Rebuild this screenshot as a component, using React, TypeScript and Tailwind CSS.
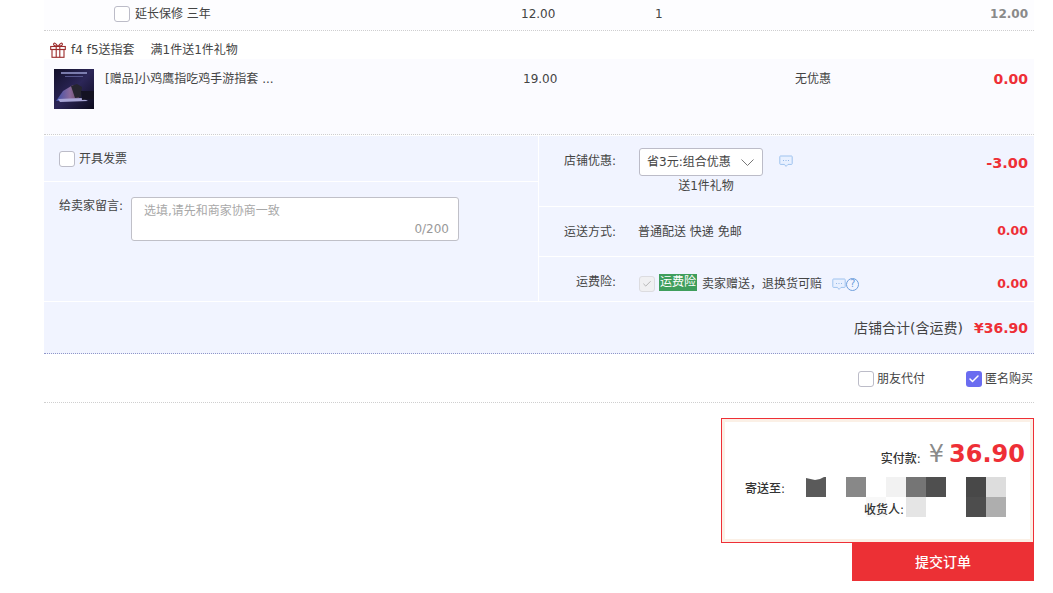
import { Check } from "lucide-react";

const font = '"DejaVu Sans","Noto Sans CJK SC",sans-serif';

function Box({ className = "" }: { className?: string }) {
  return <span className={`block size-4 shrink-0 rounded-[3px] border border-[#bcbcc8] bg-white ${className}`} />;
}

function ChatIcon({ className = "" }: { className?: string }) {
  return (
    <svg viewBox="0 0 14 13" className={`h-[13px] w-[14px] ${className}`} fill="#e8f0ff" stroke="#9fc3ee" strokeWidth="1">
      <path d="M1.5 1h11a.7.7 0 0 1 .7.7v7a.7.7 0 0 1-.7.7H9l-2 2-1.6-2H1.5a.7.7 0 0 1-.7-.7v-7a.7.7 0 0 1 .7-.7z" />
      <path d="M4 5.5h.8M6.6 5.5h.8M9.200 5.500h.8" stroke="#7fabe2" />
    </svg>
  );
}

function GiftIcon() {
  return (
    <svg viewBox="0 0 16 16" className="size-4 shrink-0" fill="none" stroke="#9c2b2b" strokeWidth="1.100">
      <rect x="0.700" y="4.500" width="14.600" height="3" />
      <rect x="2" y="7.500" width="12" height="7.800" />
      <path d="M6.200 4.500v10.800M9.800 4.500v10.800" />
      <path d="M7.700 4.300C6 .6 3.300.4 3.600 2.400c.2 1.300 2.300 1.900 4.100 1.900zM8.300 4.300C10 .6 12.700.4 12.400 2.400c-.2 1.300-2.300 1.900-4.100 1.900z" />
    </svg>
  );
}

function Thumb() {
  return (
    <svg viewBox="0 0 40 40" className="size-10 shrink-0">
      <defs>
        <linearGradient id="bg" x1="0" y1="0" x2="1" y2="1">
          <stop offset="0" stopColor="#12102a" />
          <stop offset="0.500" stopColor="#2c2658" />
          <stop offset="1" stopColor="#0c0a1c" />
        </linearGradient>
        <linearGradient id="arm" x1="0" y1="0" x2="1" y2="0">
          <stop offset="0" stopColor="#3d4fa8" />
          <stop offset="0.600" stopColor="#8a6a9c" />
          <stop offset="1" stopColor="#6b4a60" />
        </linearGradient>
      </defs>
      <rect width="40" height="40" fill="url(#bg)" />
      <rect x="7" y="3" width="26" height="2" fill="#9295c8" opacity="0.800" />
      <rect x="11" y="7" width="18" height="1" fill="#55558c" />
      <path d="M2 32L9 22l10-6 5 2 1 11-14 3z" fill="url(#arm)" />
      <path d="M4 30l24-1 6 3-28 1z" fill="#a9a6d6" />
      <path d="M17 17l6-2 5 3-1 10-6 1z" fill="#26252f" />
      <path d="M27 22h13v8l-12 1z" fill="#141222" />
    </svg>
  );
}

function Money({ children, className = "" }: { children: string; className?: string }) {
  return <span className={`font-bold text-[#ee2f36] ${className}`}>{children}</span>;
}

const mosaic = [
  ["#5a5a5a", "", "#888888", "", "#f2f2f2", "#757575", "#4f4f4f", "", "#484848", "#dddddd"],
  ["", "", "", "#f8f8f8", "", "#e5e5e5", "", "", "#4d4d4d", "#aeaeae"],
];

export default function App() {
  return (
    <div className="h-[593px] overflow-hidden bg-white pl-[44px] text-[12px] text-[#444]" style={{ fontFamily: font }}>
      <div className="w-[990px]">
        <div className="flex h-[31px] items-center border-b border-dotted border-[#cfcfcf] bg-[#fdfdff] pb-[2px]">
          <div className="flex w-[470px] items-center gap-[5px] pl-[70px]">
            <Box />
            <span>延长保修 三年</span>
          </div>
          <span className="w-[134px] pl-[7px]">12.00</span>
          <span className="w-[60px] pl-[7px]">1</span>
          <span className="flex-1 pr-[6px] text-right font-bold text-[#8a8a8a]">12.00</span>
        </div>

        <div className="flex h-[28px] items-center gap-[5px] pl-[6px] pt-[10px]">
          <GiftIcon />
          <span>f4 f5送指套</span>
          <span className="ml-[11px]">满1件送1件礼物</span>
        </div>

        <div className="flex h-[76px] border-b border-dotted border-[#cfcfcf] bg-[#fbfbff] pl-[10px] pt-[10px]">
          <Thumb />
          <span className="ml-[11px] mt-[1px] w-[418px]">[赠品]小鸡鹰指吃鸡手游指套 ...</span>
          <span className="mt-[1px] w-[272px]">19.00</span>
          <span className="mt-[1px] w-[35px] whitespace-nowrap">无优惠</span>
          <span className="-mt-[1px] flex-1 pr-[6px] text-right text-[14px] leading-[22px]">
            <Money>0.00</Money>
          </span>
        </div>

        <div className="mt-px flex h-[165px] bg-[#f1f4ff]">
          <div className="w-[495px] border-r border-white">
            <div className="flex h-[46px] items-center gap-[4px] border-b border-white pl-[15px]">
              <Box />
              <span>开具发票</span>
            </div>
            <div className="flex pl-[15px] pt-[15px]">
              <span className="w-[72px] leading-[18px]">给卖家留言:</span>
              <div className="flex h-[44px] w-[328px] flex-col rounded-[3px] border border-[#c0c0c8] bg-white px-3 pt-[4px] text-[#a8a8a8]">
                <span className="leading-[18px]">选填,请先和商家协商一致</span>
                <span className="text-right leading-[18px] -mr-[3px] text-[#999]">0/200</span>
              </div>
            </div>
          </div>

          <div className="flex-1">
            <div className="flex h-[71px] border-b border-white pt-[12px]">
              <span className="w-[100px] pr-[23px] pt-[4px] text-right">店铺优惠:</span>
              <div className="w-[124px]">
                <div className="flex h-[28px] items-center justify-between rounded-[3px] border border-[#bcbcc8] bg-white pl-[7px] pr-[8px]">
                  <span>省3元:组合优惠</span>
                  <svg viewBox="0 0 13 7" className="h-[7px] w-[13px]" fill="none" stroke="#777" strokeWidth="1">
                    <path d="M.5.5l6 6 6-6" />
                  </svg>
                </div>
                <div className="mt-[1px] pl-[10px] text-center leading-[18px]">送1件礼物</div>
              </div>
              <ChatIcon className="ml-[16px] mt-[7px]" />
              <span className="flex-1 pr-[6px] pt-[5px] text-right text-[14.500px]">
                <Money>-3.00</Money>
              </span>
            </div>
            <div className="flex h-[50px] items-center border-b border-white">
              <span className="w-[99px] pr-[22px] text-right">运送方式:</span>
              <span>普通配送 快递 免邮</span>
              <span className="flex-1 pr-[6px] text-right text-[12.500px]">
                <Money>0.00</Money>
              </span>
            </div>
            <div className="flex h-[44px] items-center pt-[10px]">
              <span className="-mt-[4px] w-[100px] pr-[23px] text-right">运费险:</span>
              <span className="flex size-4 shrink-0 items-center justify-center rounded-[3px] border border-[#dcdce0] bg-[#f0f0f2]">
                <Check className="size-[10px] text-[#aaa]" strokeWidth={2} />
              </span>
              <span className="ml-[4px] -mt-[4px] bg-[#3f9e5c] px-px leading-[17px] text-white">运费险</span>
              <span className="ml-[5px]">{"卖家赠送\uFF0C退换货可赔"}</span>
              <ChatIcon className="ml-[10px]" />
              <span className="flex size-[13px] items-center justify-center rounded-full border border-[#6f9fdc] text-[10px] leading-none text-[#6f9fdc]">?</span>
              <span className="flex-1 pr-[6px] text-right text-[12.500px]">
                <Money>0.00</Money>
              </span>
            </div>
          </div>
        </div>

        <div className="mt-px flex h-[52px] items-center justify-end gap-[11px] border-b border-dotted border-[#8f96c8] bg-[#f1f4ff] pr-[6px] pt-[2px]">
          <span className="text-[14px]">店铺合计(含运费)</span>
          <span className="text-[14px]">
            <Money>¥36.90</Money>
          </span>
        </div>

        <div className="flex h-[49px] items-center justify-end border-b border-dotted border-[#cfcfcf] pr-px pt-[2px]">
          <Box />
          <span className="ml-[3px]">朋友代付</span>
          <span className="ml-[41px] flex size-4 items-center justify-center rounded-[3px] bg-[#6a6cf0]">
            <Check className="size-3 text-white" strokeWidth={3} />
          </span>
          <span className="ml-[3px]">匿名购买</span>
        </div>

        <div className="ml-auto mt-[15px] h-[125px] w-[313px] border border-[#ee2f36] bg-white outline-[3px] -outline-offset-4 outline-[#fbf0e6]">
          <div className="flex items-center justify-end pr-[8px] pt-[19px]">
            <span className="mt-[10px] font-medium text-[#333]">实付款:</span>
            <span className="ml-[8px] text-[24px] leading-[32px] text-[#8a8a8a]">¥</span>
            <span className="ml-[5px] text-[24px] leading-[32px] font-bold text-[#ee2f36]">36.90</span>
          </div>
          <div className="relative mt-[7px] flex pl-[23px]">
            <span className="mt-[3px] w-[61px] font-medium text-[#333]">寄送至:</span>
            <div className="grid grid-cols-[repeat(10,20px)] grid-rows-[20px_20px]">
              {mosaic.flat().map((c, i) =>
                i === 0 ? (
                  <svg key={i} viewBox="0 0 20 20" className="size-5">
                    <path d="M0 1l9 2 5-1 4-2h2v20H0z" fill="#5a5a5a" />
                  </svg>
                ) : (
                  <span key={i} style={{ backgroundColor: c || "transparent" }} />
                ),
              )}
            </div>
            <span className="absolute left-[142px] top-[24px] font-medium text-[#333]">收货人:</span>
          </div>
        </div>

        <div className="ml-auto flex h-[38px] w-[182px] items-center justify-center bg-[#ec3035] text-[14px] font-medium text-white">提交订单</div>
      </div>
    </div>
  );
}
